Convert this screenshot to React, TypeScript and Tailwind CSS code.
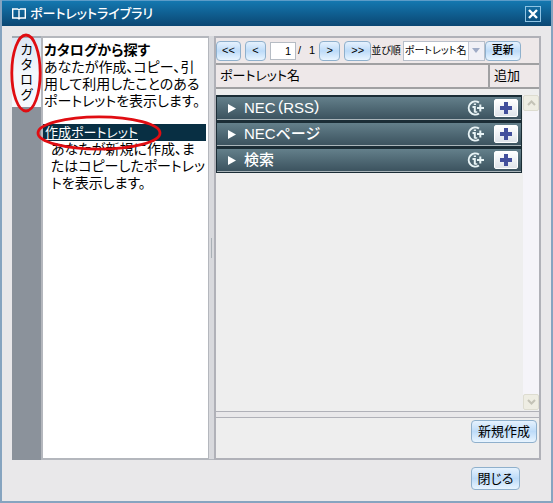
import { useState } from "react";

type Portlet = {
  id: string;
  name: string;
};

const PORTLETS: Portlet[] = [
  { id: "rss", name: "NEC（RSS）" },
  { id: "page", name: "NECページ" },
  { id: "search", name: "検索" },
];

const BUTTON =
  "flex items-center justify-center rounded-[4px] border border-[#8fb0cc] bg-linear-to-b from-[#e6f2fe] via-[#bddbf8] to-[#e9f5ff] text-black";

function BookIcon() {
  return (
    <svg width="14" height="12" viewBox="0 0 14 12" fill="none" stroke="#fff" aria-hidden="true">
      <path d="M.7 1h4.800L7 2l1.500-1h4.800v9H8.500L7 11l-1.500-1H.7zM7 2v9" strokeWidth="1.400" />
    </svg>
  );
}

function InfoIcon() {
  return (
    <svg width="17" height="16" viewBox="0 0 17 16" fill="none" stroke="#e9f4f6" aria-hidden="true">
      <path d="M12 2.500A6.600 6.600 0 1 0 12 13.500" strokeWidth="2" />
      <path d="M5.500 7h2.300v5.500M10 8h7M13.300 4.500v7" strokeWidth="2" />
      <path d="M6.800 4.200h2.200M7.800 12h2.500" strokeWidth="1.600" />
    </svg>
  );
}

function PlusIcon() {
  return (
    <svg width="12" height="12" viewBox="0 0 12 12" fill="#43509c" aria-hidden="true">
      <path d="M4 0h4v4h4v4H8v4H4V8H0V4h4z" />
    </svg>
  );
}

function Chevron({ d }: { d: string }) {
  return (
    <svg width="9" height="6" viewBox="0 0 9 6" fill="none" stroke="#c3c2b6" strokeWidth="2" aria-hidden="true">
      <path d={d} />
    </svg>
  );
}

function PortletRow({ portlet }: { portlet: Portlet }) {
  return (
    <li className="border border-t-2 border-[#1b2d36]">
      <div className="flex h-[23px] items-center border-b border-[#a9b4b9] bg-linear-to-b from-[#64808b] to-[#3c535f] pr-[3px] pl-[11px] text-white">
        <svg width="8" height="9" viewBox="0 0 8 9" fill="#fff" aria-hidden="true">
          <path d="M0 0l8 4.500L0 9z" />
        </svg>
        <span className="ml-2 flex-1 text-[15px] leading-5 font-medium">{portlet.name}</span>
        <button type="button" aria-label={`${portlet.name}の情報`} className="mr-[10px]">
          <InfoIcon />
        </button>
        <button
          type="button"
          aria-label={`${portlet.name}を追加`}
          className="flex h-[18px] w-6 items-center justify-center rounded-[2px] border border-white bg-linear-to-b from-white to-[#dfe4ea]"
        >
          <PlusIcon />
        </button>
      </div>
    </li>
  );
}

export default function App() {
  const [page, setPage] = useState("1");
  const [sort, setSort] = useState("name");

  return (
    <div className="flex min-h-screen flex-col border-x-2 border-b-2 border-[#86a4c0] bg-[#e9e8ea] font-['Liberation_Sans','Noto_Sans_CJK_JP',sans-serif] text-black [font-feature-settings:'palt']">
      <header className="flex h-[26px] shrink-0 items-center border-t border-[#5c9cc8] bg-linear-to-b from-[#1478b0] to-[#0b4773] pr-[10px] pl-[10px] text-white">
        <BookIcon />
        <h1 className="ml-1 flex-1 text-[13px] leading-5 font-medium">ポートレットライブラリ</h1>
        <button
          type="button"
          aria-label="ウィンドウを閉じる"
          className="flex size-4 items-center justify-center border border-[#8fc4e4]"
        >
          <svg width="10" height="10" viewBox="0 0 10 10" stroke="#fff" strokeWidth="2.400" aria-hidden="true">
            <path d="M1 1l8 8M9 1l-8 8" />
          </svg>
        </button>
      </header>

      <main className="flex flex-1 px-[10px] pt-[10px]">
        <nav className="w-[29px] shrink-0 bg-[#8b929b]">
          <a
            href="#catalog"
            className="relative flex h-[71px] flex-col items-center border-t-2 border-[#a3abb3] bg-linear-to-b from-[#dce7f4] via-[#f3f7fc] to-[#f5f8fc] pt-1 text-[13px] leading-[15px]"
          >
            <span>カ</span>
            <span>タ</span>
            <span>ロ</span>
            <span>グ</span>
            <svg className="absolute -top-[5px] -left-[2px]" width="32" height="80" viewBox="0 0 32 80" fill="none" aria-hidden="true">
              <ellipse cx="16" cy="40" rx="14.200" ry="38" stroke="#e00d12" strokeWidth="2.800" />
            </svg>
          </a>
        </nav>

        <section className="w-[168px] shrink-0 border-2 border-r border-[#b4b7bd] bg-white text-sm leading-[17px]">
          <h2 className="mt-1 pl-px font-bold">カタログから探す</h2>
          <p className="pl-px whitespace-nowrap">
            あなたが作成、コピー、引
            <br />
            用して利用したことのある
            <br />
            ポートレットを表示します。
          </p>
          <div className="relative mt-[14px] mr-[2px] h-[17px] bg-[#082f43] pl-[2px] text-[13px] text-white">
            <a href="#created" className="underline underline-offset-2">
              作成ポートレット
            </a>
            <svg className="absolute -top-[9px] -left-[7px]" width="126" height="36" viewBox="0 0 126 36" fill="none" aria-hidden="true">
              <ellipse cx="63" cy="18" rx="61" ry="16.200" stroke="#e00d12" strokeWidth="2.800" />
            </svg>
          </div>
          <p className="pl-2 whitespace-nowrap">
            あなたが新規に作成、ま
            <br />
            たはコピーしたポートレッ
            <br />
            トを表示します。
          </p>
        </section>

        <div className="flex w-[5px] shrink-0 items-center justify-center border-b border-[#b4b7bd] bg-[#d8d9dd]">
          <div className="h-5 w-px bg-[#a9b0b6]" />
        </div>

        <section className="flex min-w-0 flex-1 flex-col border-2 border-[#b0b1b8] bg-[#eee]">
          <div className="flex h-[25px] items-center bg-[#eee8e9] text-[11px] whitespace-nowrap">
            <button type="button" aria-label="最初のページ" className={`${BUTTON} h-5 w-[25px]`}>
              &lt;&lt;
            </button>
            <button type="button" aria-label="前のページ" className={`${BUTTON} ml-1 h-5 w-[21px]`}>
              &lt;
            </button>
            <input
              aria-label="ページ"
              value={page}
              onChange={(e) => setPage(e.target.value)}
              className="ml-1 h-[18px] w-[26px] border border-[#b6bcc4] bg-white pr-1 text-right"
            />
            <span className="ml-[2px]">/</span>
            <span className="ml-2">1</span>
            <button type="button" aria-label="次のページ" className={`${BUTTON} ml-1 h-5 w-[21px]`}>
              &gt;
            </button>
            <button type="button" aria-label="最後のページ" className={`${BUTTON} ml-1 h-5 w-[27px]`}>
              &gt;&gt;
            </button>
            <label htmlFor="sort" className="text-[10px]">
              並び順
            </label>
            <div className="relative ml-[2px] h-5 w-[82px]">
              <select
                id="sort"
                value={sort}
                onChange={(e) => setSort(e.target.value)}
                className="h-5 w-full appearance-none border border-[#b8bfca] bg-white pl-px text-[10px]"
              >
                <option value="name">ポートレット名</option>
              </select>
              <span className="pointer-events-none absolute top-px right-px flex h-[18px] w-4 items-center justify-center border-l border-[#c5c9d6] bg-[#f0f0f6]">
                <svg width="8" height="5" viewBox="0 0 8 5" fill="#9fabc6" aria-hidden="true">
                  <path d="M0 0h8L4 5z" />
                </svg>
              </span>
            </div>
            <button type="button" className={`${BUTTON} h-5 w-9 font-medium`}>
              更新
            </button>
          </div>

          <div className="flex h-[26px] items-center border-y-2 border-[#a0a0a2] bg-[#eee8e9] text-[13px]">
            <span className="flex-1 pl-1">ポートレット名</span>
            <span className="flex h-full w-[51px] items-center border-l-2 border-[#a0a0a2] pl-1">追加</span>
          </div>

          <div className="mt-[6px] flex flex-1">
            <ul className="flex-1">
              {PORTLETS.map((portlet) => (
                <PortletRow key={portlet.id} portlet={portlet} />
              ))}
            </ul>
            <div className="ml-px flex w-4 flex-col justify-between bg-[#f5f4f9]">
              <button
                type="button"
                aria-label="上へスクロール"
                className="flex h-4 items-center justify-center rounded-[2px] border border-[#dddcd0] bg-[#eeede3]"
              >
                <Chevron d="M1 5l3.500-3.500L8 5" />
              </button>
              <button
                type="button"
                aria-label="下へスクロール"
                className="flex h-4 items-center justify-center rounded-[2px] border border-[#dddcd0] bg-[#eeede3]"
              >
                <Chevron d="M1 1l3.500 3.500L8 1" />
              </button>
            </div>
          </div>

          <div className="mt-px h-[7px] border-y border-[#b0b1b8] bg-[#e9e8ea]" />
          <div className="flex h-10 items-start justify-end pt-[2px] pr-[2px]">
            <button type="button" className={`${BUTTON} h-[23px] w-[66px] text-[13px]`}>
              新規作成
            </button>
          </div>
        </section>
      </main>

      <footer className="flex h-[41px] shrink-0 items-start justify-end pt-[7px] pr-[31px]">
        <button type="button" className={`${BUTTON} h-[23px] w-[49px] text-[13px]`}>
          閉じる
        </button>
      </footer>
    </div>
  );
}
